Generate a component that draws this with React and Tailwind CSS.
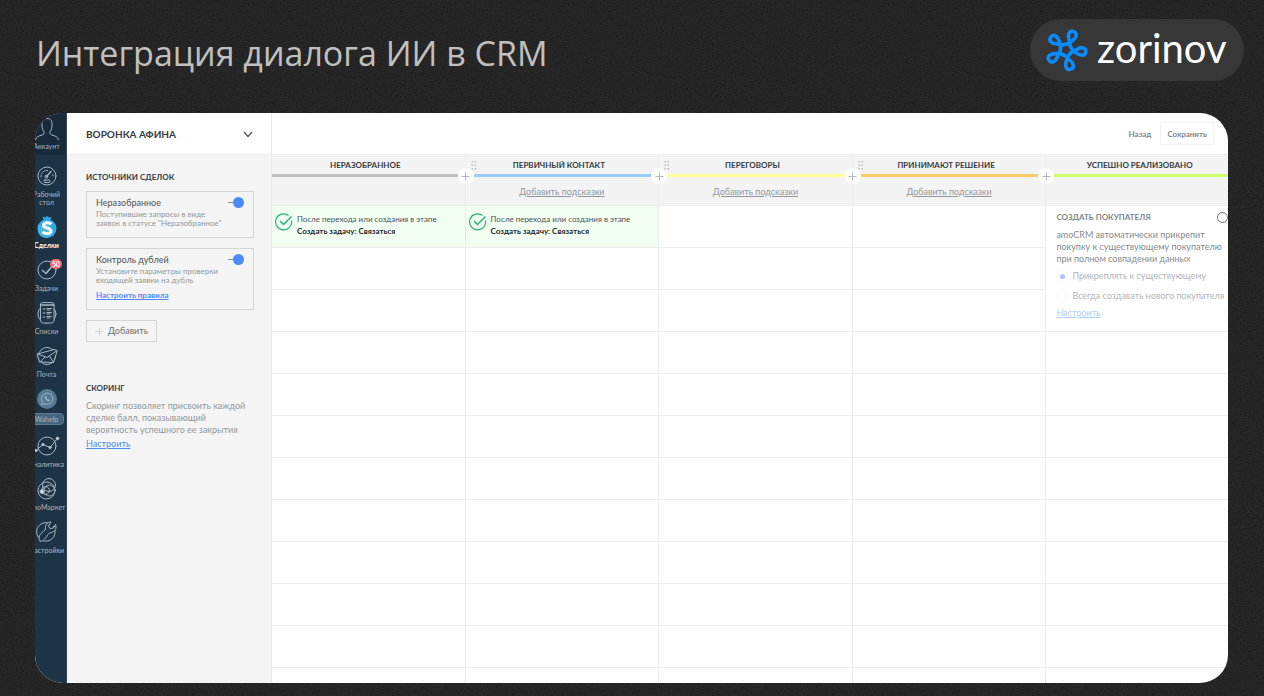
import React from 'react';

const MENU = [
    { id: 'dashboard', label: 'Рабочий стол', icon: 'dashboard' },
    { id: 'leads', label: 'Сделки', icon: 'leads', active: true },
    { id: 'tasks', label: 'Задачи', icon: 'tasks', badge: '50' },
    { id: 'lists', label: 'Списки', icon: 'lists' },
    { id: 'mail', label: 'Почта', icon: 'mail' },
    { id: 'wahelp', label: 'Wahelp', icon: 'wahelp', pill: true },
    { id: 'stats', label: 'Аналитика', icon: 'stats' },
    { id: 'market', label: 'amoМаркет', icon: 'market' },
    { id: 'settings', label: 'Настройки', icon: 'settings' },
];

const STAGES = [
    { name: 'НЕРАЗОБРАННОЕ', bar: 'bg-[#c1c1c1]', first: true, task: true },
    { name: 'ПЕРВИЧНЫЙ КОНТАКТ', bar: 'bg-[#99ccff]', drag: true, hint: true, task: true },
    { name: 'ПЕРЕГОВОРЫ', bar: 'bg-[#ffff99]', drag: true, hint: true },
    { name: 'ПРИНИМАЮТ РЕШЕНИЕ', bar: 'bg-[#ffcc66]', drag: true, hint: true },
    { name: 'УСПЕШНО РЕАЛИЗОВАНО', bar: 'bg-[#ccff66]', last: true, customer: true },
];

const Grain = () => (
    <svg className="absolute inset-0 w-full h-full opacity-10 pointer-events-none" aria-hidden="true">
        <filter id="grain">
            <feTurbulence type="fractalNoise" baseFrequency="0.8" numOctaves="2" seed="4" />
            <feColorMatrix type="matrix" values="0.5 0.5 0 0 -0.32  0.5 0.5 0 0 -0.32  0.5 0.5 0 0 -0.32  0 0 0 0 1" />
        </filter>
        <rect width="100%" height="100%" filter="url(#grain)" />
    </svg>
);

const Logo = () => (
    <div className="flex items-center h-[62px] w-[214px] pl-[15px] gap-[9px] rounded-full bg-[#373737]">
        <svg width="43" height="46" viewBox="-21 -23 43 46" fill="none" stroke="#0a8cff" strokeWidth="3.6" strokeLinejoin="round" aria-hidden="true">
            {[6, 78, 150, 222, 294].map((a) => (
                <g key={a} transform={`rotate(${a})`}>
                    <path d="M2.3 -7.1C4 -3.5 5 -1.5 8 0.4C11 2 13 4 16.6 3.600C21.200 2.8 20.800 -3.8 16.400 -4C12.5 -4.2 11 -1.2 8 0.4" />
                </g>
            ))}
        </svg>
        <span className="pb-1 font-['Lato',sans-serif] text-[40px] leading-[46px] text-white">zorinov</span>
    </div>
);

const MenuIcon = ({ name }) => {
    const common = {
        width: 22,
        height: 22,
        viewBox: '0 0 22 22',
        fill: 'none',
        stroke: '#a9b6c0',
        strokeWidth: 1,
        strokeLinecap: 'round',
        strokeLinejoin: 'round',
        'aria-hidden': true,
    };
    switch (name) {
        case 'dashboard':
            return (
                <svg {...common}>
                    <circle cx="11" cy="11" r="9" />
                    <path d="M10.5 11.5L15 6.5" strokeWidth="1.4" />
                    <circle cx="10.3" cy="11.7" r="1.4" />
                    <path d="M5 12a6 6 0 0 1 6.500-6.500M16.800 9.500a6 6 0 0 1 .2 2.500" strokeDasharray="1.500 1.500" />
                    <rect x="8" y="15" width="6" height="2.500" rx="1" />
                </svg>
            );
        case 'leads':
            return (
                <svg {...common} stroke="none">
                    <circle cx="11" cy="12.500" r="9.500" fill="#2fa9df" />
                    <path d="M6.500 0.500L9 1.500L11 0L13 1.500L15.500 0.800L14 5H8z" fill="#2fa9df" />
                    <path d="M2 9c3 2 6-1 9-2l3 1-1 3 4 5-5 6c-5 1-9-2-10-6z" fill="#5cc4ec" opacity="0.5" />
                    <path d="M15.500 8.200C13 6 7.500 6.200 7.500 9.200C7.500 12.500 15 11.500 15 15C15 18.200 9 18.200 6.500 15.800" fill="none" stroke="#fff" strokeWidth="3" strokeLinecap="butt" />
                </svg>
            );
        case 'tasks':
            return (
                <svg {...common}>
                    <circle cx="11" cy="11" r="9" />
                    <path d="M6.500 11.500L10 14.500L15.500 8" strokeWidth="1.600" />
                </svg>
            );
        case 'lists':
            return (
                <svg {...common}>
                    <circle cx="11" cy="12" r="9" />
                    <path d="M4.500 2.500C4.500 1 5.500 .6 6.500 .6H16C17.500 .6 18 1.500 18 2.500V18C18 20 17 21 15 21H7.500C5.500 21 4.500 20 4.500 18z" fill="#1e3448" />
                    <path d="M4.500 3H18" strokeWidth="1.500" />
                    <path d="M7 7h2M11 6.500h4.500M11 8h3M7 11h2M11 10.500h4.500M11 12h3M7 15h2M11 14.500h4.500M11 16h3" />
                </svg>
            );
        case 'mail':
            return (
                <svg {...common}>
                    <circle cx="11" cy="11" r="8.500" />
                    <path d="M1.500 9L18 4.500L21 5.500L20.500 8L17.500 17.500L4 17z" fill="#1e3448" />
                    <path d="M1.500 9L11 12.500L20.500 6M4 17L9 12M17.500 17.500L13.500 11" />
                </svg>
            );
        case 'wahelp':
            return (
                <svg {...common} stroke="#9fb4c4">
                    <circle cx="11" cy="11" r="10" fill="#567b95" stroke="none" />
                    <path d="M5.500 16.500L6.300 13.800A5.700 5.700 0 1 1 8.400 15.800z" />
                    <path d="M9 8.500c-1 1.500 3 5.800 5 4.500l-1.200-1.600-1 .4-1.600-1.800.4-1z" fill="#9fb4c4" strokeWidth="0.500" />
                </svg>
            );
        case 'stats':
            return (
                <svg {...common} overflow="visible">
                    <circle cx="11" cy="11" r="9" />
                    <path d="M0 15.500L7 9.500L14 12.500L21 4" />
                    <g fill="#c6d0d8">
                        <circle cx="0" cy="15.500" r="1.200" />
                        <circle cx="7" cy="9.500" r="1.200" />
                        <circle cx="14" cy="12.500" r="1.200" />
                        <circle cx="21.500" cy="3.500" r="1.400" />
                    </g>
                </svg>
            );
        case 'market':
            return (
                <svg {...common}>
                    <circle cx="10.500" cy="12.500" r="8.500" />
                    <circle cx="13" cy="7" r="6.500" />
                    <circle cx="13.500" cy="12.500" r="5.500" />
                    <circle cx="9.500" cy="12.500" r="4" />
                    <circle cx="6" cy="13.500" r="2" fill="#dde4e9" />
                </svg>
            );
        case 'settings':
            return (
                <svg {...common}>
                    <path d="M17.500 5.500A9.300 9.300 0 1 1 12 1.800" />
                    <path d="M4 20C2 18 3 14 6 11.500L9 9C10 8 9 6 10 4C11 2 13 .8 15 1L12.500 5L14 7.500L17.500 7L19.500 3.500C21 7 19 10.500 15.500 11.500C13 12 12.500 12.500 11 15C9 18.500 6 21 4 20z" fill="#1e3448" />
                </svg>
            );
        default:
            return null;
    }
};

const Rail = () => (
    <nav className="shrink-0 w-10 -ml-2 bg-[#1d3447] border-r border-[#31465a] text-[7px] leading-[8px] text-[#a9b6c0] text-center">
        <a href="#account" className="flex flex-col items-center h-[42px] pt-1 bg-[#172b3c]">
            <svg width="26" height="25" viewBox="0 0 26 25" fill="none" stroke="#a9b6c0" aria-hidden="true">
                <path d="M1.500 23C2 19.500 5 19 8 18C10 17.300 10.500 16.500 10 14.500C8.500 13 8 11 8 8C7.500 4 9.500 1.500 13 1.500S18.500 4 18 8C18 11 17.500 13 16 14.500C15.500 16.500 16 17.300 18 18C21 19 24 19.500 24.500 23" />
            </svg>
            Аккаунт
        </a>
        <ul className="flex flex-col gap-[10px] pt-[10px]">
            {MENU.map((item) => (
                <li key={item.id}>
                    <a href={`#${item.id}`} className="relative flex flex-col items-center gap-[3px]">
                        <MenuIcon name={item.icon} />
                        {item.badge && (
                            <span className="absolute left-[23px] top-0 w-[12px] h-[10px] rounded-full bg-[#f26a6a] text-white text-[7px] leading-[10px] font-bold">
                                {item.badge}
                            </span>
                        )}
                        <span className={item.pill ? 'w-[34px] py-px rounded-sm border border-[#5d7b90] bg-[#44657d]' : item.active ? 'font-bold text-white' : 'max-w-[34px] flex justify-center'}>
                            {item.label}
                        </span>
                    </a>
                </li>
            ))}
        </ul>
    </nav>
);

const SourceCard = ({ id, title, text, link }) => (
    <div className="w-full border border-[#d2d4d5] px-[9px] pt-1 pb-[9px]">
        <div className="flex items-center justify-between">
            <label htmlFor={id} className="text-[9px] leading-[13px] text-[#4c5258]">{title}</label>
            <div className="flex items-center">
                <span className="w-[5px] h-px bg-[#8b9196]" />
                <input id={id} type="checkbox" defaultChecked className="appearance-none size-[11px] rounded-full bg-[#4c8bf7]" />
            </div>
        </div>
        <p className="mt-px text-[8px] leading-[9px] text-[#92989b] whitespace-pre-line">{text}</p>
        {link && <a href="#rules" className="block mt-[6px] text-[8px] leading-[9px] font-bold text-[#4c8bf7] underline">{link}</a>}
    </div>
);

const Sidebar = () => (
    <aside className="shrink-0 w-[205px] flex flex-col bg-[#f4f4f4] border-r border-[#e8eaeb]">
        <button className="flex items-center justify-between h-[42px] pt-px pl-[19px] pr-[18px] bg-white border-b border-[#ebecec] text-[10px] font-bold text-[#363b44]">
            ВОРОНКА АФИНА
            <svg width="10" height="7" viewBox="0 0 10 7" fill="none" stroke="#4c5258" strokeWidth="1.200" aria-hidden="true">
                <path d="M1 1L5 5.500L9 1" />
            </svg>
        </button>
        <div className="pl-[19px] pr-[17px] pt-[16px]">
            <h2 className="text-[8px] leading-[12px] font-bold text-[#363b44]">ИСТОЧНИКИ СДЕЛОК</h2>
            <div className="flex flex-col items-start gap-[10px] mt-2">
                <SourceCard id="incoming" title="Неразобранное" text={'Поступившие запросы в виде\nзаявок в статусе "Неразобранное"'} />
                <SourceCard id="doubles" title="Контроль дублей" text={'Установите параметры проверки\nвходящей заявки на дубль'} link="Настроить правила" />
                <button className="flex items-center gap-1 h-[22px] px-2 border border-[#d2d4d5] text-[9px] text-[#6b7176]">
                    <svg width="9" height="9" viewBox="0 0 9 9" stroke="#cfd1d2" aria-hidden="true">
                        <path d="M4.500 0.500V8.500M0.500 4.500H8.500" />
                    </svg>
                    Добавить
                </button>
            </div>
            <h2 className="mt-10 text-[8px] leading-[12px] font-bold text-[#363b44]">СКОРИНГ</h2>
            <p className="mt-[6px] text-[9px] leading-[12px] text-[#92989b]">
                Скоринг позволяет присвоить каждой сделке балл, показывающий вероятность успешного ее закрытия
            </p>
            <a href="#scoring" className="block mt-[2px] text-[9px] leading-[12px] text-[#4c8bf7] underline">Настроить</a>
        </div>
    </aside>
);

const TaskCell = () => (
    <div className="flex items-start gap-1 h-[42px] pl-[3px] pt-[7px] bg-[#f2fef2] border-b border-[#ebecec]">
        <svg className="shrink-0" width="18" height="18" viewBox="0 0 18 18" fill="none" stroke="#23b574" strokeWidth="1.200" aria-hidden="true">
            <path d="M16.500 7.500A8 8 0 1 1 13.500 2.500" />
            <path d="M5 8L8.500 11.500L16.500 3.500" strokeWidth="1.500" />
        </svg>
        <div className="text-[8px] leading-[12px] whitespace-nowrap">
            <p className="text-[#4c5258]">После перехода или создания в этапе</p>
            <p className="font-bold text-[#22272d]">Создать задачу: Связаться</p>
        </div>
    </div>
);

const CustomerCell = () => (
    <div className="h-[126px] pl-[10px] pt-[5px] border-b border-[#ebecec] text-[9px] leading-[12px] whitespace-nowrap">
        <div className="flex items-center justify-between">
            <label htmlFor="customer" className="text-[8px] font-bold text-[#7f858a]">СОЗДАТЬ ПОКУПАТЕЛЯ</label>
            <input id="customer" type="checkbox" className="appearance-none shrink-0 size-[11px] rounded-full border border-[#6b7176] bg-white" />
        </div>
        <p className="mt-[6px] text-[#858b8f]">
            amoCRM автоматически прикрепит<br />
            покупку к существующему покупателю<br />
            при полном совпадении данных
        </p>
        <label className="flex items-center gap-1 mt-1 leading-[14px] text-[#b1b5b8]">
            <input type="radio" name="attach" defaultChecked className="appearance-none shrink-0 grid place-items-center size-[12px] rounded-full border border-[#f7f7f7] checked:before:block checked:before:size-[5px] checked:before:rounded-full checked:before:bg-[#a6c5fb]" />
            Прикреплять к существующему
        </label>
        <label className="flex items-center gap-1 mt-[6px] leading-[14px] text-[#b1b5b8]">
            <input type="radio" name="attach" className="appearance-none shrink-0 size-[12px] rounded-full border border-[#f7f7f7]" />
            Всегда создавать нового покупателя
        </label>
        <a href="#customers" className="block mt-1 text-[#b0ccfb] underline">Настроить</a>
    </div>
);

const Stage = ({ stage }) => (
    <section className={`min-w-0 ${stage.last ? '' : 'border-r border-[#ebecec]'}`}>
        <header className="relative h-[51px] bg-[#f3f3f3] border-b border-[#ebecec] text-center">
            {stage.drag && (
                <svg className="absolute left-[5px] top-[6px]" width="6" height="9" viewBox="0 0 6 9" fill="#b9bcbe" aria-hidden="true">
                    <path d="M0.500 0h1.500v1.500h-1.500zM3.500 0h1.500v1.500h-1.500zM0.500 3.500h1.500v1.500h-1.500zM3.500 3.500h1.500v1.500h-1.500zM0.500 7h1.500v1.500h-1.500zM3.500 7h1.500v1.500h-1.500z" />
                </svg>
            )}
            <h3 className={`pt-1 text-[8px] leading-[13px] font-bold text-[#363b44] ${stage.last ? 'pl-[5px]' : 'pr-[6px]'}`}>{stage.name}</h3>
            <div className={`h-[3px] mt-[2px] ${stage.first ? '' : 'ml-2'} ${stage.last ? '' : 'mr-[6px]'} ${stage.bar}`} />
            {!stage.last && (
                <button aria-label="Добавить этап" className="absolute z-10 -right-[9px] top-[13px] flex items-center justify-center size-4 rounded-full bg-white">
                    <svg width="9" height="9" viewBox="0 0 9 9" stroke="#b4b7b9" aria-hidden="true">
                        <path d="M4.500 0.500V8.500M0.500 4.500H8.500" />
                    </svg>
                </button>
            )}
            {stage.hint && <a href="#hint" className="block mt-[9px] text-[9px] leading-[12px] text-[#92989b] underline">Добавить подсказки</a>}
        </header>
        {stage.task && <TaskCell />}
        {stage.customer && <CustomerCell />}
        {Array.from({ length: stage.customer ? 8 : stage.task ? 10 : 11 }, (_, i) => (
            <div key={i} className="h-[42px] border-b border-[#ebecec]" />
        ))}
        <div className="h-[15px]" />
    </section>
);

const App = () => (
    <div className="relative min-h-screen bg-[#1d1d1d] font-['Lato','Noto_Sans',sans-serif] overflow-hidden">
        <Grain />
        <div className="relative pb-[13px]">
            <header className="flex items-start justify-between pl-9 pr-5 pt-[19px] pb-8">
                <h1 className="pt-[10px] font-['Open_Sans',sans-serif] text-[34px] leading-[48px] text-[#c0c0c0]">Интеграция диалога ИИ в CRM</h1>
                <Logo />
            </header>
            <main className="flex mx-[35px] mr-9 rounded-[28px] bg-white overflow-hidden">
                <Rail />
                <Sidebar />
                <div className="flex-1 min-w-0">
                    <div className="flex items-center justify-end gap-[9px] h-[42px] pr-[14px] border-b border-[#ebecec] text-[8px] font-bold text-[#7f858a]">
                        <button>Назад</button>
                        <button className="h-[23px] px-[6px] border border-[#f3f3f3]">Сохранить</button>
                    </div>
                    <div className="grid grid-cols-[194fr_194fr_194fr_194fr_182fr]">
                        {STAGES.map((stage) => (
                            <Stage key={stage.name} stage={stage} />
                        ))}
                    </div>
                </div>
            </main>
        </div>
    </div>
);

export default App;
